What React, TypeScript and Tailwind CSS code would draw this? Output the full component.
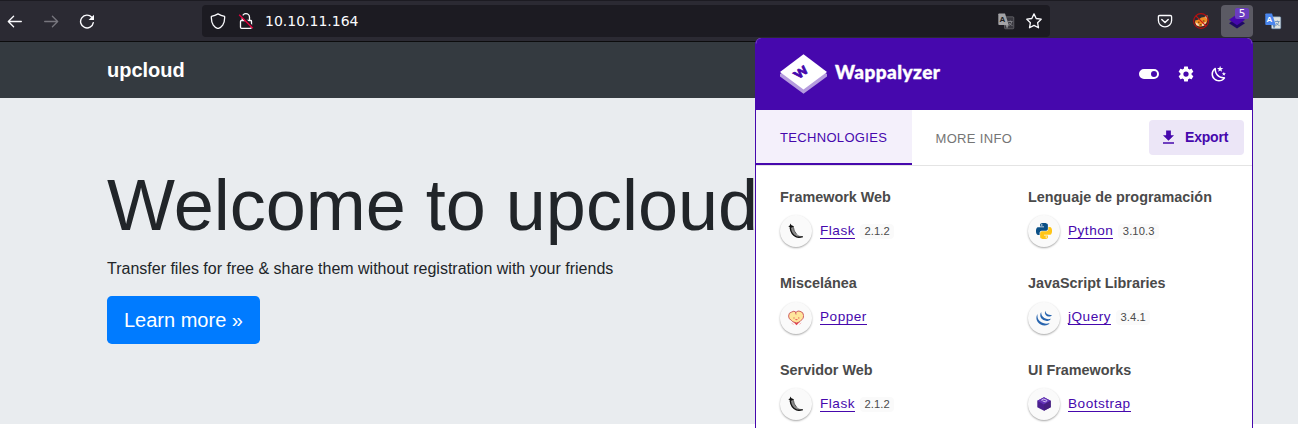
import React from "react";

const COG =
  "M12,15.5A3.5,3.5 0 0,1 8.5,12A3.5,3.5 0 0,1 12,8.5A3.5,3.5 0 0,1 15.5,12A3.5,3.5 0 0,1 12,15.5M19.43,12.97C19.47,12.65 19.5,12.33 19.5,12C19.5,11.67 19.47,11.34 19.43,11L21.54,9.37C21.73,9.22 21.78,8.95 21.66,8.73L19.66,5.27C19.54,5.05 19.27,4.96 19.05,5.05L16.56,6.05C16.04,5.66 15.5,5.32 14.87,5.07L14.5,2.42C14.46,2.18 14.25,2 14,2H10C9.75,2 9.54,2.18 9.5,2.42L9.13,5.07C8.5,5.32 7.96,5.66 7.44,6.05L4.95,5.05C4.73,4.96 4.46,5.05 4.34,5.27L2.34,8.73C2.21,8.95 2.27,9.22 2.46,9.37L4.57,11C4.53,11.34 4.5,11.67 4.5,12C4.5,12.33 4.53,12.65 4.57,12.97L2.46,14.63C2.27,14.78 2.21,15.05 2.34,15.27L4.34,18.73C4.46,18.95 4.73,19.03 4.95,18.95L7.44,17.94C7.96,18.34 8.5,18.68 9.13,18.93L9.5,21.58C9.54,21.82 9.75,22 10,22H14C14.25,22 14.46,21.82 14.5,21.58L14.87,18.93C15.5,18.67 16.04,18.34 16.56,17.94L19.05,18.95C19.27,19.03 19.54,18.95 19.66,18.73L21.66,15.27C21.78,15.05 21.73,14.78 21.54,14.63L19.43,12.97Z";
const TOGGLE =
  "M17,7H7A5,5 0 0,0 2,12A5,5 0 0,0 7,17H17A5,5 0 0,0 22,12A5,5 0 0,0 17,7M17,15A3,3 0 0,1 14,12A3,3 0 0,1 17,9A3,3 0 0,1 20,12A3,3 0 0,1 17,15Z";
const NIGHT =
  "M17.75,4.09L15.22,6.03L16.13,9.09L13.5,7.28L10.87,9.09L11.78,6.03L9.25,4.09L12.44,4L13.5,1L14.56,4L17.75,4.09M21.25,11L19.61,12.25L20.2,14.23L18.5,13.06L16.8,14.23L17.39,12.25L15.75,11L17.81,10.95L18.5,9L19.19,10.95L21.25,11M18.97,15.95C19.8,15.87 20.69,17.05 20.16,17.8C19.84,18.25 19.5,18.67 19.08,19.07C15.17,23 8.84,23 4.94,19.07C1.03,15.17 1.03,8.83 4.94,4.93C5.34,4.53 5.76,4.17 6.21,3.85C6.96,3.32 8.14,4.21 8.06,5.04C7.79,7.9 8.75,10.87 10.95,13.06C13.14,15.26 16.1,16.22 18.97,15.95M17.33,17.97C14.5,17.81 11.7,16.64 9.53,14.5C7.36,12.31 6.2,9.5 6.04,6.68C3.23,9.82 3.34,14.64 6.35,17.66C9.37,20.67 14.19,20.78 17.33,17.97Z";
const SNAKE =
  "M14.25.18l.9.2.73.26.59.3.45.32.34.34.25.34.16.33.1.3.04.26.02.2-.01.13V8.5l-.05.63-.13.55-.21.46-.26.38-.3.31-.33.25-.35.19-.35.14-.33.1-.3.07-.26.04-.21.02H8.77l-.69.05-.59.14-.5.22-.41.27-.33.32-.27.35-.2.36-.15.37-.1.35-.07.32-.04.27-.02.21v3.06H3.17l-.21-.03-.28-.07-.32-.12-.35-.18-.36-.26-.36-.36-.35-.46-.32-.59-.28-.73-.21-.88-.14-1.05-.05-1.23.06-1.22.16-1.04.24-.87.32-.71.36-.57.4-.44.42-.33.42-.24.4-.16.36-.1.32-.05.24-.01h.16l.06.01h8.16v-.83H6.18l-.01-2.75-.02-.37.05-.34.11-.31.17-.28.25-.26.31-.23.38-.2.44-.18.51-.15.58-.12.64-.1.71-.06.77-.04.84-.02 1.27.05zm-6.3 1.98l-.23.33-.08.41.08.41.23.34.33.22.41.09.41-.09.33-.22.23-.34.08-.41-.08-.41-.23-.33-.33-.22-.41-.09-.41.09z";

function Mdi({ d, size }: { d: string; size: number }) {
  return (
    <svg width={size} height={size} viewBox="0 0 24 24" fill="currentColor" fillRule="evenodd" className="block">
      <path d={d} />
    </svg>
  );
}

function ArrowIcon({ flip = false }: { flip?: boolean }) {
  return (
    <svg width="16" height="16" viewBox="0 0 16 16" fill="none" stroke="currentColor" strokeWidth="1.3" strokeLinecap="round" strokeLinejoin="round" className={flip ? "block -scale-x-100" : "block"}>
      <path d="M1.4 8.5H14.3M6.6 3.2L1.3 8.5L6.6 13.8" />
    </svg>
  );
}

function ReloadIcon() {
  return (
    <svg width="16" height="16" viewBox="0 0 16 16" className="block">
      <path d="M12.8 4.3A6.4 6.4 0 1 0 14.3 9.6" fill="none" stroke="#fbfbfe" strokeWidth="1.4" strokeLinecap="round" />
      <path d="M15 1.8V6.4Q15 7 14.4 7H9.6Z" fill="#fbfbfe" />
    </svg>
  );
}

function ShieldIcon() {
  return (
    <svg width="16" height="16" viewBox="0 0 16 16" fill="none" stroke="#fbfbfe" strokeWidth="1.3" strokeLinejoin="round" className="block">
      <path d="M8 .9Q10.900 2.600 14.600 3.300Q15 8.500 12.700 12.200Q11 14.700 8 15.600Q5 14.700 3.300 12.200Q1 8.500 1.400 3.300Q5.100 2.600 8 .9Z" />
    </svg>
  );
}

function LockIcon() {
  return (
    <svg width="16" height="16" viewBox="0 0 16 16" fill="none" className="block">
      <path d="M4.300 7.500V4.300A3.500 3.500 0 0 1 11.500 4.300V7.500M3.500 7.500H12.700Q13.500 7.500 13.500 8.300V14.300Q13.500 15.300 12.500 15.300H3.500Q2.500 15.300 2.500 14.300V8.500Q2.500 7.500 3.500 7.500Z" stroke="#fbfbfe" strokeWidth="1.300" />
      <path d="M2.400 1.500L15.600 14.700" stroke="#1c1b22" strokeWidth="2" />
      <path d="M1.200 1.700L14.800 15.300" stroke="#e8003f" strokeWidth="1.400" />
    </svg>
  );
}

function TranslateIcon({ front, back, glyph, small }: { front: string; back: string; glyph: string; small: string }) {
  return (
    <svg width="17" height="17" viewBox="0 0 17 17" className="block">
      <rect x="6.500" y="3.800" width="9.300" height="12" rx="1" fill={back} stroke={small} strokeWidth=".5" />
      <path d="M10 8.500H14.500M12.300 7.500V8.500M14 8.500Q13.300 11.300 10.800 12.600M11 9.800Q12.300 12 14.500 12.600" stroke={small} strokeWidth=".8" fill="none" />
      <path d="M1.200 .4H7L10.800 12H1.200Q.3 12 .3 11.100V1.300Q.3 .4 1.200 .4Z" fill={front} />
      <path d="M7.500 12H10.800L9 15.800Z" fill={small} />
      <text x="1.600" y="9.300" fontSize="8" fontWeight="700" fontFamily="Liberation Sans, sans-serif" fill={glyph}>A</text>
    </svg>
  );
}

function StarIcon() {
  return (
    <svg width="16" height="16" viewBox="0 0 16 16" fill="none" stroke="#fbfbfe" strokeWidth="1.300" strokeLinejoin="round" className="block">
      <path d="M8 .9L10.200 5.500L15.200 6.200L11.600 9.700L12.500 14.800L8 12.400L3.500 14.800L4.400 9.700L.8 6.200L5.800 5.500Z" />
    </svg>
  );
}

function PocketIcon() {
  return (
    <svg width="16" height="16" viewBox="0 0 16 16" fill="none" stroke="#fbfbfe" strokeWidth="1.300" strokeLinecap="round" strokeLinejoin="round" className="block">
      <path d="M2.700 2.500H13.300Q14.600 2.500 14.600 3.800V7.500A6.600 6.300 0 0 1 1.400 7.500V3.800Q1.400 2.500 2.700 2.500Z" />
      <path d="M4.800 6.500L8 9.500L11.200 6.500" strokeWidth="1.500" />
    </svg>
  );
}

function FoxIcon() {
  return (
    <svg width="16" height="16" viewBox="0 0 16 16" className="block">
      <path d="M2.200 7.500L5 6.800L8.500 4.500L11.500 4L14.300 2.300L14.600 7L13.500 10L10.500 13L7 13.800L3.500 12.500L2 10Z" fill="#ee8a22" />
      <path d="M2.600 9.200L5.500 11L6 13.200L3.300 12Z M9 11L13.500 8.500L11.300 12.400L9 13Z" fill="#f3dcc0" />
      <path d="M11.500 4L14.300 2.300L14 6Z" fill="#c9b09c" />
      <path d="M5 9.200H6.500M9.800 8H11.500M6.800 11.800H8.500" stroke="#5b2c10" strokeWidth="1" />
      <circle cx="8" cy="8" r="7.400" fill="none" stroke="#b80f0f" strokeWidth="1.100" />
      <path d="M2.900 2.900L13.100 13.100" stroke="#c91212" strokeWidth="1.100" />
    </svg>
  );
}

function LayersIcon() {
  return (
    <svg width="16" height="16" viewBox="0 0 16 16" className="block">
      <path d="M0 10.300L8 4.800L16 10.300L8 15.600Z" fill="#1f0a66" />
      <path d="M0 6.800L8 1.300L16 6.800L8 12.200Z" fill="#4608ad" />
    </svg>
  );
}

function WappalyzerMark() {
  return (
    <svg width="48" height="41" viewBox="0 0 48 41" className="block shrink-0">
      <path d="M0 20L23.500 5L47 20V22.500L23.500 39.800L0 22.500Z" fill="#b59cde" />
      <path d="M0 18L23.500 .3L47 18L23.500 35.500Z" fill="#fff" />
      <text transform="matrix(.8 -.57 .64 .64 19.200 24.600)" x="-1" y="0" fontSize="13" fontWeight="900" fontFamily="Lato, sans-serif" fill="#4608ad" stroke="#4608ad" strokeWidth=".9">W</text>
    </svg>
  );
}

function FlaskIcon() {
  return (
    <svg width="16" height="16" viewBox="0 0 16 16" className="block">
      <path d="M.3 3.200L1.900 2.500L2.300 .6L3.500 2.200L5.800 3.200L5.600 4.600L2 5.300L1.500 4Z" fill="#111" />
      <path d="M2.200 5L5.400 4.300Q5.600 8 8.300 10.700Q11 13.200 14.800 13.300Q12 15.100 8.500 14Q2.800 11.500 2.200 5Z" fill="#8a8a8a" />
      <path d="M2.300 5Q3 11.500 8.500 13.900Q11 14.800 14.800 13.600" fill="none" stroke="#111" strokeWidth="1.400" />
      <path d="M5.500 4.500Q5.800 8.300 8.500 10.900" fill="none" stroke="#333" strokeWidth=".7" />
    </svg>
  );
}

function PythonIcon() {
  return (
    <svg width="16" height="16" viewBox="0 0 24 24" fillRule="evenodd" className="block">
      <path d={SNAKE} fill="#0a4f86" />
      <path d={SNAKE} fill="#ffc516" transform="rotate(180 12 12)" />
    </svg>
  );
}

function PopperIcon() {
  return (
    <svg width="16" height="16" viewBox="0 0 16 16" className="block">
      <path d="M5 11.500L8.500 15.200L12 11.500Z" fill="#e5404f" />
      <path d="M3.500 12.800L5.500 14.800M13.200 12.800L11.500 14.500" stroke="#f3b9bd" strokeWidth="1" />
      <path d="M8 2.300Q10 .2 12 1.300Q15.500 2 15.600 5.500Q15.800 8.500 13.500 10Q12 12 10.500 12.300Q8.500 13.600 6.500 12.300Q4.300 12 3.300 10.200Q.4 9 .6 6Q.6 2.500 3.700 2Q6 .2 8 2.300Z" fill="#ffe69c" stroke="#c9505a" strokeWidth=".9" />
      <path d="M7.500 2L8 4.500" stroke="#c9505a" strokeWidth=".9" />
      <circle cx="6" cy="8" r=".7" fill="#e0705a" />
      <circle cx="10.800" cy="8" r=".7" fill="#e0705a" />
      <path d="M7 9.300Q8.400 11 9.800 9.300Z" fill="#e5404f" />
    </svg>
  );
}

function JQueryIcon() {
  return (
    <svg width="16" height="16" viewBox="0 0 16 16" fill="#2764ae" className="block">
      <path d="M1.600 3.800Q-.9 8.200 1.700 12Q5 16.200 10.300 15.300Q12.800 14.700 13.700 13Q9.500 14.600 5.800 12.600Q.6 9.700 1.600 3.800Z" />
      <path d="M5.200 2.100Q3.300 5.300 5.200 8.200Q7.500 11.300 11.700 10.900Q14 10.500 14.900 8.800Q11.300 10 8.300 8.100Q5 6 5.200 2.100Z" />
      <path d="M9.300 .8Q8.200 3.200 9.700 5Q11.500 7 14 6.400Q15.300 6 15.900 4.900Q13.500 5.300 11.500 4.300Q9.500 3.200 9.300 .8Z" />
    </svg>
  );
}

function BootstrapIcon() {
  return (
    <svg width="16" height="16" viewBox="0 0 16 16" className="block">
      <path d="M8 1.300L14.700 4.800V11.300L8 14.800L1.300 11.300V4.800Z" fill="#4a1f8f" />
      <path d="M8 1.300L14.700 4.800L8 8.600L1.300 4.800Z" fill="#6434b8" />
      <path d="M8 8.600L14.700 4.800V11.300L8 14.800Z" fill="#46207f" />
      <path d="M5.300 4.300L7.800 3L11 4.500L9.500 6L7.800 5.400L6.500 4.800" fill="none" stroke="#d9c8f5" strokeWidth="1" />
    </svg>
  );
}

type Tech = { category: string; name: string; version?: string; icon: React.ReactNode };

const columns: Tech[][] = [
  [
    { category: "Framework Web", name: "Flask", version: "2.1.2", icon: <FlaskIcon /> },
    { category: "Miscelánea", name: "Popper", icon: <PopperIcon /> },
    { category: "Servidor Web", name: "Flask", version: "2.1.2", icon: <FlaskIcon /> },
  ],
  [
    { category: "Lenguaje de programación", name: "Python", version: "3.10.3", icon: <PythonIcon /> },
    { category: "JavaScript Libraries", name: "jQuery", version: "3.4.1", icon: <JQueryIcon /> },
    { category: "UI Frameworks", name: "Bootstrap", icon: <BootstrapIcon /> },
  ],
];

function TechItem({ tech }: { tech: Tech }) {
  return (
    <div className="h-[86.4px]">
      <div className="h-[18px] text-[14.4px] leading-[18px] font-bold whitespace-nowrap text-[#4a4a4a]">{tech.category}</div>
      <div className="mt-[9.25px] flex h-8 items-center">
        <span className="flex size-8 items-center justify-center rounded-full bg-[#fafafa] shadow-[0_1px_2px_rgba(0,0,0,0.35)]">{tech.icon}</span>
        <a className="ml-2 h-[15px] border-b border-[#4608ad] text-[13.6px] leading-[14px] tracking-[0.5px] text-[#4608ad]">{tech.name}</a>
        {tech.version && (
          <span className="ml-[5px] h-[15px] rounded bg-[#fafafa] px-[4.5px] text-[11.2px] leading-[15px] tracking-[0.1px] text-[#4a4a4a]">{tech.version}</span>
        )}
      </div>
    </div>
  );
}

function Cell({ children }: { children: React.ReactNode }) {
  return <div className="flex h-8 w-9 shrink-0 items-center justify-center">{children}</div>;
}

function Toolbar() {
  return (
    <div className="flex h-[42px] border-t border-b border-t-[#1c1b22] border-b-[#0c0c0d] bg-[#2b2a33] pt-1 text-[#fbfbfe]">
      <div className="-ml-[3px] flex">
        <Cell><ArrowIcon /></Cell>
        <Cell><span className="text-[#77767e]"><ArrowIcon flip /></span></Cell>
        <Cell><ReloadIcon /></Cell>
      </div>
      <div className="ml-[97px] flex h-8 w-[848px] items-center rounded bg-[#1c1b22] pr-2 pl-2">
        <ShieldIcon />
        <span className="ml-3"><LockIcon /></span>
        <span className="ml-[11px] font-['DejaVu_Sans',sans-serif] text-[14px] leading-4">10.10.11.164</span>
        <span className="ml-auto"><TranslateIcon front="#a3a3a6" back="#39383f" glyph="#1c1b22" small="#8c8c90" /></span>
        <span className="ml-[11px]"><StarIcon /></span>
      </div>
      <div className="ml-[97px] flex">
        <Cell><PocketIcon /></Cell>
        <Cell><FoxIcon /></Cell>
        <Cell>
          <span className="relative flex size-8 items-center justify-center rounded bg-[#5b5a64]">
            <LayersIcon />
            <span className="absolute top-[3px] right-1 h-[11px] w-[14px] rounded-[2px] bg-[#6b3cc0] text-center font-['DejaVu_Sans',sans-serif] text-[10.5px] leading-[11px]">5</span>
          </span>
        </Cell>
        <Cell><TranslateIcon front="#4a86ee" back="#dfe3e0" glyph="#fff" small="#5f86b5" /></Cell>
      </div>
    </div>
  );
}

function Popup() {
  return (
    <div className="absolute top-[38px] left-[755px] h-[390px] w-[498px] overflow-hidden rounded-t-md border-x border-[#4608ad] bg-white">
      <div className="flex h-[72px] items-center bg-[#4608ad] pr-6 pl-6 text-white">
        <WappalyzerMark />
        <span className="-mt-[5px] ml-[7px] font-['Lato',sans-serif] text-[19px] leading-6 font-black tracking-[0.45px] [-webkit-text-stroke:0.4px_white]">Wappalyzer</span>
        <div className="ml-auto flex items-center">
          <Mdi d={TOGGLE} size={24} />
          <span className="ml-4"><Mdi d={COG} size={18} /></span>
          <span className="ml-[15px]"><Mdi d={NIGHT} size={18} /></span>
        </div>
      </div>
      <div className="flex h-14 border-b border-[#e4e4e4] text-[13px] tracking-[0.33px]">
        <div className="h-[55px] w-[156px] border-b-2 border-[#4608ad] bg-[#f4f0fb] pl-6 leading-[55px] text-[#4608ad]">TECHNOLOGIES</div>
        <div className="pl-[23.5px] leading-[57px] text-[#757575]">MORE INFO</div>
        <div className="mt-[10px] mr-2 ml-auto flex h-[35px] w-[95px] items-center rounded bg-[#ece6f7] pl-[10px] text-[#4608ad]">
          <span className="mb-px"><Mdi d="M5,20H19V18H5M19,9H15V3H9V9H5L12,16L19,9Z" size={19} /></span>
          <span className="ml-[7px] text-[14px] font-bold tracking-[-0.2px]">Export</span>
        </div>
      </div>
      <div className="grid grid-cols-2 pt-[22px] pl-6">
        {columns.map((items, i) => (
          <div key={i} className={i === 1 ? "pl-3" : ""}>
            {items.map((t) => <TechItem key={t.category} tech={t} />)}
          </div>
        ))}
      </div>
    </div>
  );
}

export default function App() {
  return (
    <div className="relative h-[428px] w-[1298px] overflow-hidden bg-white font-['Liberation_Sans',Arial,sans-serif]">
      <Toolbar />
      <nav className="flex h-14 items-center bg-[#343a40] pl-[107px]">
        <span className="text-xl leading-[30px] font-bold text-white">upcloud</span>
      </nav>
      <main className="h-[326px] bg-[#e9ecef] pt-16 pl-[107px] text-[#212529]">
        <h1 className="mb-[8.6px] text-[72px] leading-[86.4px] whitespace-nowrap">Welcome to upcloud</h1>
        <p className="mb-[15.4px] text-base leading-6">Transfer files for free &amp; share them without registration with your friends</p>
        <a className="inline-block h-12 rounded-[4.8px] bg-[#007bff] px-[17px] text-xl leading-[48px] text-white">Learn more »</a>
      </main>
      <Popup />
    </div>
  );
}
